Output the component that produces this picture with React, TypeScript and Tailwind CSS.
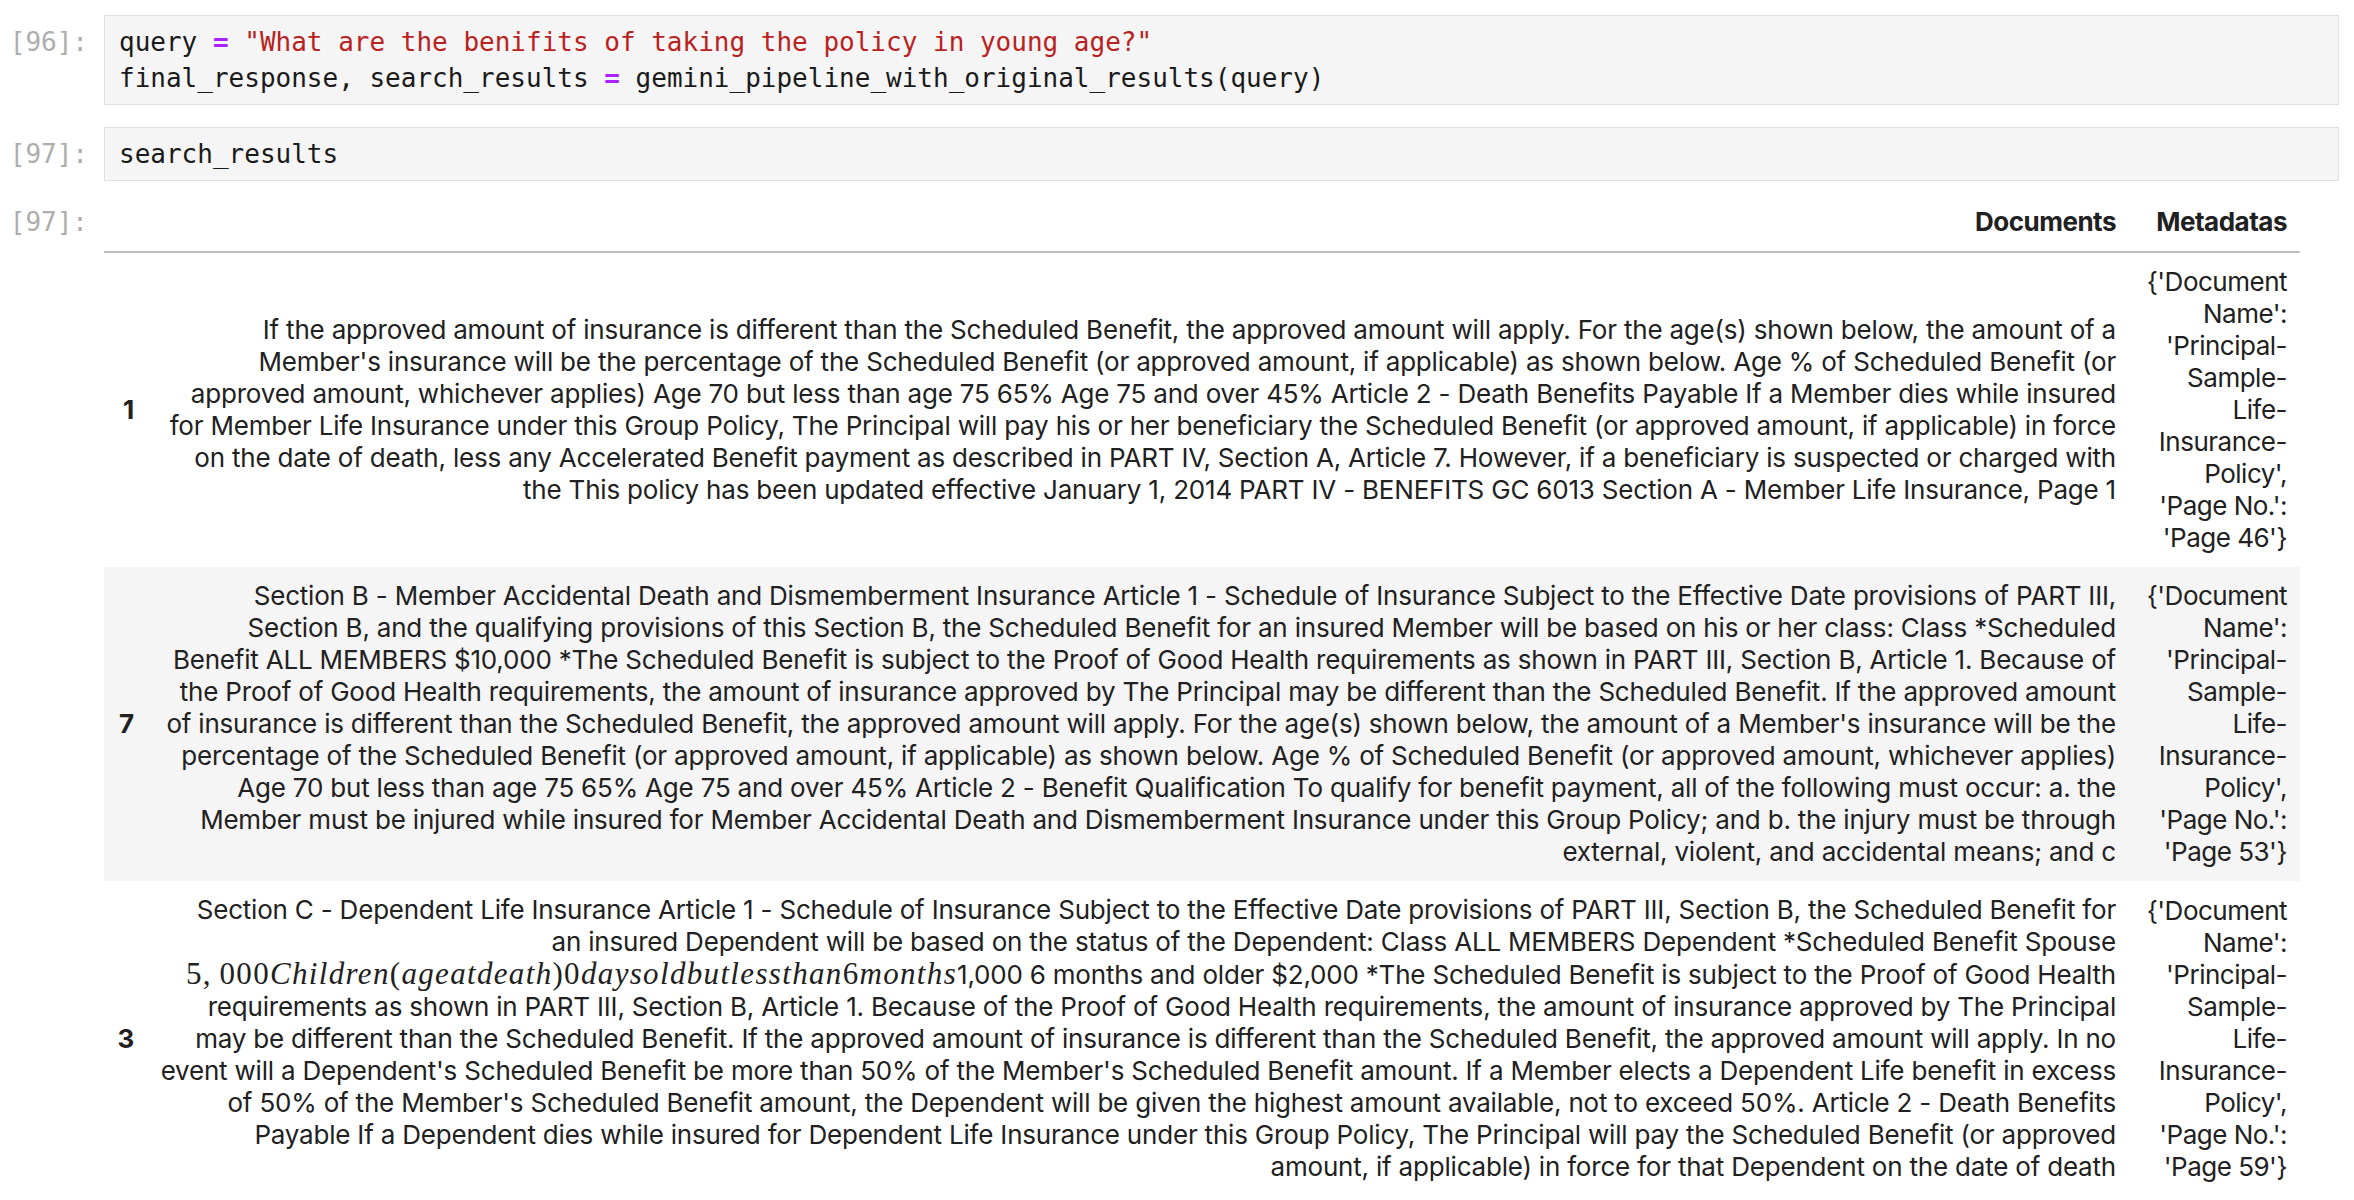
const mono = "font-['DejaVu_Sans_Mono',monospace]";
const sans = "font-['Inter','Liberation_Sans',sans-serif]";
const math = "font-['Liberation_Serif',serif]";

const rows: { idx: string; doc: React.ReactNode[]; meta: string[]; striped?: boolean }[] = [
  {
    idx: "1",
    doc: [
      "If the approved amount of insurance is different than the Scheduled Benefit, the approved amount will apply. For the age(s) shown below, the amount of a",
      "Member's insurance will be the percentage of the Scheduled Benefit (or approved amount, if applicable) as shown below. Age % of Scheduled Benefit (or",
      "approved amount, whichever applies) Age 70 but less than age 75 65% Age 75 and over 45% Article 2 - Death Benefits Payable If a Member dies while insured",
      "for Member Life Insurance under this Group Policy, The Principal will pay his or her beneficiary the Scheduled Benefit (or approved amount, if applicable) in force",
      "on the date of death, less any Accelerated Benefit payment as described in PART IV, Section A, Article 7. However, if a beneficiary is suspected or charged with",
      "the This policy has been updated effective January 1, 2014 PART IV - BENEFITS GC 6013 Section A - Member Life Insurance, Page 1",
    ],
    meta: ["{'Document", "Name':", "'Principal-", "Sample-", "Life-", "Insurance-", "Policy',", "'Page No.':", "'Page 46'}"],
  },
  {
    idx: "7",
    striped: true,
    doc: [
      "Section B - Member Accidental Death and Dismemberment Insurance Article 1 - Schedule of Insurance Subject to the Effective Date provisions of PART III,",
      "Section B, and the qualifying provisions of this Section B, the Scheduled Benefit for an insured Member will be based on his or her class: Class *Scheduled",
      "Benefit ALL MEMBERS $10,000 *The Scheduled Benefit is subject to the Proof of Good Health requirements as shown in PART III, Section B, Article 1. Because of",
      "the Proof of Good Health requirements, the amount of insurance approved by The Principal may be different than the Scheduled Benefit. If the approved amount",
      "of insurance is different than the Scheduled Benefit, the approved amount will apply. For the age(s) shown below, the amount of a Member's insurance will be the",
      "percentage of the Scheduled Benefit (or approved amount, if applicable) as shown below. Age % of Scheduled Benefit (or approved amount, whichever applies)",
      "Age 70 but less than age 75 65% Age 75 and over 45% Article 2 - Benefit Qualification To qualify for benefit payment, all of the following must occur: a. the",
      "Member must be injured while insured for Member Accidental Death and Dismemberment Insurance under this Group Policy; and b. the injury must be through",
      "external, violent, and accidental means; and c",
    ],
    meta: ["{'Document", "Name':", "'Principal-", "Sample-", "Life-", "Insurance-", "Policy',", "'Page No.':", "'Page 53'}"],
  },
  {
    idx: "3",
    doc: [
      "Section C - Dependent Life Insurance Article 1 - Schedule of Insurance Subject to the Effective Date provisions of PART III, Section B, the Scheduled Benefit for",
      "an insured Dependent will be based on the status of the Dependent: Class ALL MEMBERS Dependent *Scheduled Benefit Spouse",
      <>
        <span className={`${math} text-[31px] tracking-[0.043em]`}>
          5,&thinsp;000<i>Children</i>(<i>ageatdeath</i>)0<i>daysoldbutlessthan</i>6<i>months</i>
        </span>
        1,000 6 months and older $2,000 *The Scheduled Benefit is subject to the Proof of Good Health
      </>,
      "requirements as shown in PART III, Section B, Article 1. Because of the Proof of Good Health requirements, the amount of insurance approved by The Principal",
      "may be different than the Scheduled Benefit. If the approved amount of insurance is different than the Scheduled Benefit, the approved amount will apply. In no",
      "event will a Dependent's Scheduled Benefit be more than 50% of the Member's Scheduled Benefit amount. If a Member elects a Dependent Life benefit in excess",
      "of 50% of the Member's Scheduled Benefit amount, the Dependent will be given the highest amount available, not to exceed 50%. Article 2 - Death Benefits",
      "Payable If a Dependent dies while insured for Dependent Life Insurance under this Group Policy, The Principal will pay the Scheduled Benefit (or approved",
      "amount, if applicable) in force for that Dependent on the date of death",
    ],
    meta: ["{'Document", "Name':", "'Principal-", "Sample-", "Life-", "Insurance-", "Policy',", "'Page No.':", "'Page 59'}"],
  },
];

function Prompt({ n, className = "" }: { n: number; className?: string }) {
  return (
    <div className={`w-[104px] shrink-0 pr-4 text-right text-[26px] leading-[36px] text-[#adadad] ${mono} ${className}`}>
      [{n}]:
    </div>
  );
}

function CodeBox({ children }: { children: React.ReactNode }) {
  return (
    <div className={`flex-1 border border-[#e0e0e0] bg-[#f5f5f5] px-[14px] py-2 text-[26px] leading-[36px] text-[#1a1a1a] ${mono} whitespace-pre`}>
      {children}
    </div>
  );
}

export default function App() {
  return (
    <div className="min-h-screen w-[2354px] overflow-hidden bg-white pt-[15px] pr-[15px]">
      {/* In [96] */}
      <div className="flex">
        <Prompt n={96} className="pt-[9px]" />
        <CodeBox>
          <div>
            query <span className="font-bold text-[#aa22ff]">=</span>{" "}
            <span className="text-[#ba2121]">"What are the benifits of taking the policy in young age?"</span>
          </div>
          <div>
            final_response, search_results <span className="font-bold text-[#aa22ff]">=</span>{" "}
            gemini_pipeline_with_original_results(query)
          </div>
        </CodeBox>
      </div>

      {/* In [97] */}
      <div className="mt-[22px] flex">
        <Prompt n={97} className="pt-[9px]" />
        <CodeBox>search_results</CodeBox>
      </div>

      {/* Out [97] */}
      <div className="mt-[12px] flex">
        <Prompt n={97} className="pt-[11px]" />
        <table className={`w-[2196px] table-fixed border-collapse text-[26px] leading-[32px] tracking-[-0.2px] text-[#212121] ${sans}`}>
          <colgroup>
            <col className="w-[43px]" />
            <col className="w-[1982px]" />
            <col className="w-[171px]" />
          </colgroup>
          <thead>
            <tr className="border-b-2 border-[#bdbdbd]">
              <th className="p-[13px]" />
              <th className="p-[13px] text-right font-bold tracking-[-0.5px]">Documents</th>
              <th className="p-[13px] text-right font-bold tracking-[-0.5px]">Metadatas</th>
            </tr>
          </thead>
          <tbody>
            {rows.map((r) => (
              <tr key={r.idx} className={r.striped ? "bg-[#f5f5f5]" : "bg-white"}>
                <th className="p-[13px] pl-0 text-right align-middle font-bold">{r.idx}</th>
                <td className="whitespace-nowrap p-[13px] text-right align-middle">
                  {r.doc.map((line, i) => (
                    <div key={i}>{line}</div>
                  ))}
                </td>
                <td className="p-[13px] text-right align-middle tracking-[-0.5px]">
                  {r.meta.map((m, i) => (
                    <div key={i} className="whitespace-nowrap">
                      {m}
                    </div>
                  ))}
                </td>
              </tr>
            ))}
          </tbody>
        </table>
      </div>
    </div>
  );
}
